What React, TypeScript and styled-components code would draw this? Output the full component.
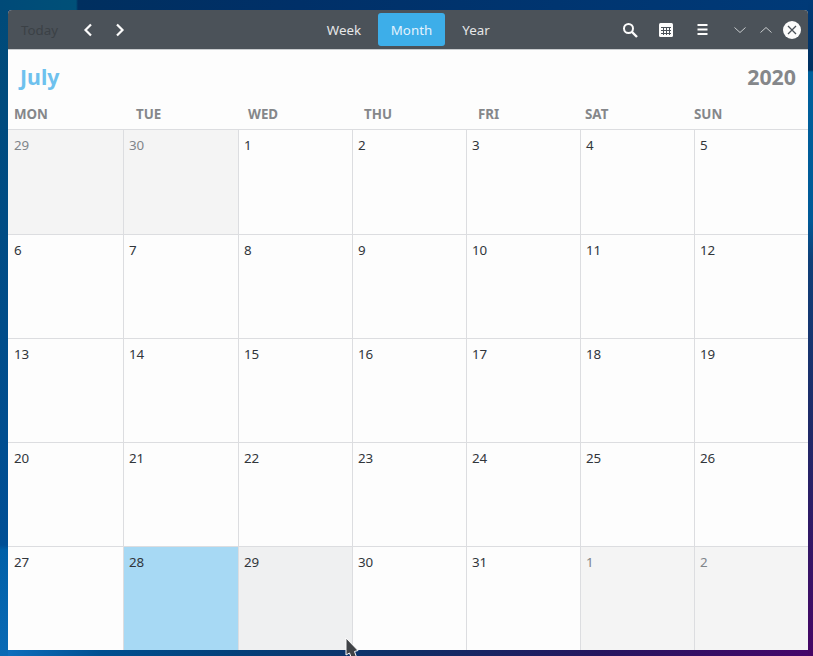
import React from "react";
import styled, { createGlobalStyle } from "styled-components";

const Global = createGlobalStyle`
  html, body { margin: 0; padding: 0; height: 656px; overflow: hidden; }
  body {
    font-family: "Noto Sans", "Open Sans", sans-serif;
    background-color: #023a72;
    background-repeat: no-repeat;
    background-image:
      linear-gradient(180deg, #003a78 0, #003060 70px, #00609c 72px, #005a98 220px, #0f3f78 260px, #1f2a68 430px, #450565 656px),
      linear-gradient(90deg, #004a78 0, #005078 76px, #002f5f 78px, #003068 300px, #003a78 813px),
      linear-gradient(180deg, #004a78 0, #004f96 545px, #0060a8 550px, #0a6ab5 656px),
      linear-gradient(90deg, #0f70c0 0, #004f90 100px, #03407a 230px, #0f2f66 400px, #25165f 600px, #45056a 813px);
    background-size: 5px 100%, 100% 10px, 8px 100%, 100% 6px;
    background-position: right top, left top, left top, left bottom;
  }
`;

const Desktop = styled.div`
  width: 813px;
  height: 656px;
  padding: 10px 5px 6px 8px;
  box-sizing: border-box;
`;

const Window = styled.div`
  width: 800px;
  height: 640px;
  display: flex;
  flex-direction: column;
  background: #fdfdfd;
  border-radius: 4px 4px 0 0;
  overflow: hidden;
`;

const HeaderBar = styled.header`
  height: 39px;
  flex: none;
  display: grid;
  grid-template-columns: 1fr auto 1fr;
  align-items: center;
  background: #4b5259;
  border-bottom: 1px solid #c9cccf;
`;

const LeftGroup = styled.div`
  display: flex;
  align-items: center;
  padding-left: 13px;
`;

const RightGroup = styled.div`
  display: flex;
  align-items: center;
  justify-content: flex-end;
`;

const TodayLabel = styled.span`
  font-size: 13.33px;
  color: #3b4146;
  width: 51px;
`;

const IconButton = styled.button<{ $w: number }>`
  width: ${(p) => p.$w}px;
  height: 32px;
  padding: 0;
  border: 0;
  background: none;
  display: flex;
  align-items: center;
  justify-content: center;
`;

const Switcher = styled.nav`
  display: flex;
  align-items: center;
  margin-left: 1px;
`;

const ViewTab = styled.span<{ $active?: boolean; $w: number }>`
  width: ${(p) => p.$w}px;
  height: 33px;
  display: flex;
  align-items: center;
  justify-content: center;
  font-size: 13.33px;
  border-radius: 3px;
  color: ${(p) => (p.$active ? "#e3f2fd" : "#e6e7e8")};
  background: ${(p) => (p.$active ? "#3daee9" : "transparent")};
`;

const WindowControls = styled.div`
  display: flex;
  align-items: center;
  margin-left: 7px;
`;

const CloseCircle = styled.span`
  width: 18px;
  height: 18px;
  border-radius: 50%;
  background: #fcfcfc;
  display: flex;
  align-items: center;
  justify-content: center;
  margin: 0 7px 0 4px;
`;

const TitleRow = styled.div`
  height: 52px;
  box-sizing: border-box;
  flex: none;
  display: flex;
  justify-content: space-between;
  align-items: center;
  padding: 1px 12px 0 12px;
  font-size: 21.33px;
  font-weight: 700;
`;

const Month = styled.span`
  color: #6ec1ee;
`;

const Year = styled.span`
  color: #85878a;
`;

const Columns = "115px 115px 114px 114px 114px 114px 114px";

const WeekHeader = styled.div`
  height: 28px;
  box-sizing: border-box;
  padding-top: 5px;
  flex: none;
  display: grid;
  grid-template-columns: ${Columns};
  border-bottom: 1px solid #dcdde0;
`;

const WeekLabel = styled.span<{ $offset: number }>`
  padding-left: ${(p) => p.$offset}px;
  font-size: 13.33px;
  line-height: 15px;
  font-weight: 700;
  color: #85878a;
`;

const Grid = styled.div`
  flex: 1;
  display: grid;
  grid-template-columns: ${Columns};
  grid-template-rows: repeat(5, 104px);
`;

const Cell = styled.div<{ $tone: "plain" | "other" | "today" | "hover"; $col: number; $row: number }>`
  box-sizing: border-box;
  padding: 6px 0 0 ${(p) => (p.$col === 0 ? 6 : 5)}px;
  font-size: 13.33px;
  line-height: 18px;
  border-left: ${(p) => (p.$col === 0 ? "0" : "1px solid #dcdde0")};
  border-top: ${(p) => (p.$row === 0 ? "0" : "1px solid #dcdde0")};
  color: ${(p) => (p.$tone === "other" ? "#80858a" : "#31363b")};
  background: ${(p) =>
    p.$tone === "other" ? "#f4f4f4" : p.$tone === "today" ? "#a7d9f4" : p.$tone === "hover" ? "#eff0f1" : "#fdfdfd"};
`;

const Cursor = styled.svg`
  position: absolute;
  left: 345px;
  top: 637px;
`;

const weekdays: [string, number][] = [
  ["MON", 6],
  ["TUE", 13],
  ["WED", 10],
  ["THU", 12],
  ["FRI", 12],
  ["SAT", 5],
  ["SUN", 0],
];

type Day = { n: number; tone: "plain" | "other" | "today" | "hover" };
const days: Day[] = [
  { n: 29, tone: "other" },
  { n: 30, tone: "other" },
  ...Array.from({ length: 31 }, (_, i): Day => ({
    n: i + 1,
    tone: i + 1 === 28 ? "today" : i + 1 === 29 ? "hover" : "plain",
  })),
  { n: 1, tone: "other" },
  { n: 2, tone: "other" },
];

export default function App() {
  return (
    <Desktop>
      <Global />
      <Window>
        <HeaderBar>
          <LeftGroup>
            <TodayLabel>Today</TodayLabel>
            <IconButton $w={32}>
              <svg width="12" height="16" viewBox="0 0 12 16" fill="none" stroke="#fcfcfc" strokeWidth="2.2">
                <path d="M9 2.5 3.5 8 9 13.5" />
              </svg>
            </IconButton>
            <IconButton $w={32}>
              <svg width="12" height="16" viewBox="0 0 12 16" fill="none" stroke="#fcfcfc" strokeWidth="2.2">
                <path d="M3 2.5 8.5 8 3 13.5" />
              </svg>
            </IconButton>
          </LeftGroup>
          <Switcher>
            <ViewTab $w={68}>Week</ViewTab>
            <ViewTab $w={67} $active>
              Month
            </ViewTab>
            <ViewTab $w={62}>Year</ViewTab>
          </Switcher>
          <RightGroup>
            <IconButton $w={36}>
              <svg width="16" height="16" viewBox="0 0 16 16" fill="none" stroke="#fcfcfc" strokeWidth="2">
                <circle cx="6.5" cy="6.5" r="4.5" />
                <path d="M10 10l5 5" strokeWidth="2.4" />
              </svg>
            </IconButton>
            <IconButton $w={36}>
              <svg width="14" height="14" viewBox="0 0 14 14">
                <rect width="14" height="14" rx="1.5" fill="#fcfcfc" />
                <path d="M2 4.5h10M2 7.5h10M2 10.5h10" stroke="#4b5259" strokeWidth="1" />
                <path d="M4.5 4v8M7.5 4v8M10.5 4v8" stroke="#4b5259" strokeWidth="1" />
              </svg>
            </IconButton>
            <IconButton $w={36}>
              <svg width="11" height="11" viewBox="0 0 11 11">
                <path d="M0.5 1h10M0.5 5.5h10M0.5 10h10" stroke="#fcfcfc" strokeWidth="2" />
              </svg>
            </IconButton>
            <WindowControls>
              <IconButton $w={26}>
                <svg width="14" height="8" viewBox="0 0 14 8" fill="none" stroke="#c9ccce" strokeWidth="1">
                  <path d="M1.5 1.5 7 6.5l5.5-5" />
                </svg>
              </IconButton>
              <IconButton $w={26}>
                <svg width="14" height="8" viewBox="0 0 14 8" fill="none" stroke="#c9ccce" strokeWidth="1">
                  <path d="M1.5 6.5 7 1.5l5.5 5" />
                </svg>
              </IconButton>
              <CloseCircle>
                <svg width="10" height="10" viewBox="0 0 10 10" fill="none" stroke="#4b5259" strokeWidth="1.3">
                  <path d="M1 1l8 8M9 1 1 9" />
                </svg>
              </CloseCircle>
            </WindowControls>
          </RightGroup>
        </HeaderBar>
        <TitleRow>
          <Month>July</Month>
          <Year>2020</Year>
        </TitleRow>
        <WeekHeader>
          {weekdays.map(([d, o]) => (
            <WeekLabel key={d} $offset={o}>
              {d}
            </WeekLabel>
          ))}
        </WeekHeader>
        <Grid>
          {days.map((d, i) => (
            <Cell key={i} $tone={d.tone} $col={i % 7} $row={Math.floor(i / 7)}>
              {d.n}
            </Cell>
          ))}
        </Grid>
      </Window>
      <Cursor width="15" height="19" viewBox="0 0 15 19">
        <path d="M1 1 13 13.5 9.5 14.5 11.5 20H6L4.5 16 1 18z" fill="#404347" stroke="#fcfcfc" strokeWidth="1" />
      </Cursor>
    </Desktop>
  );
}
